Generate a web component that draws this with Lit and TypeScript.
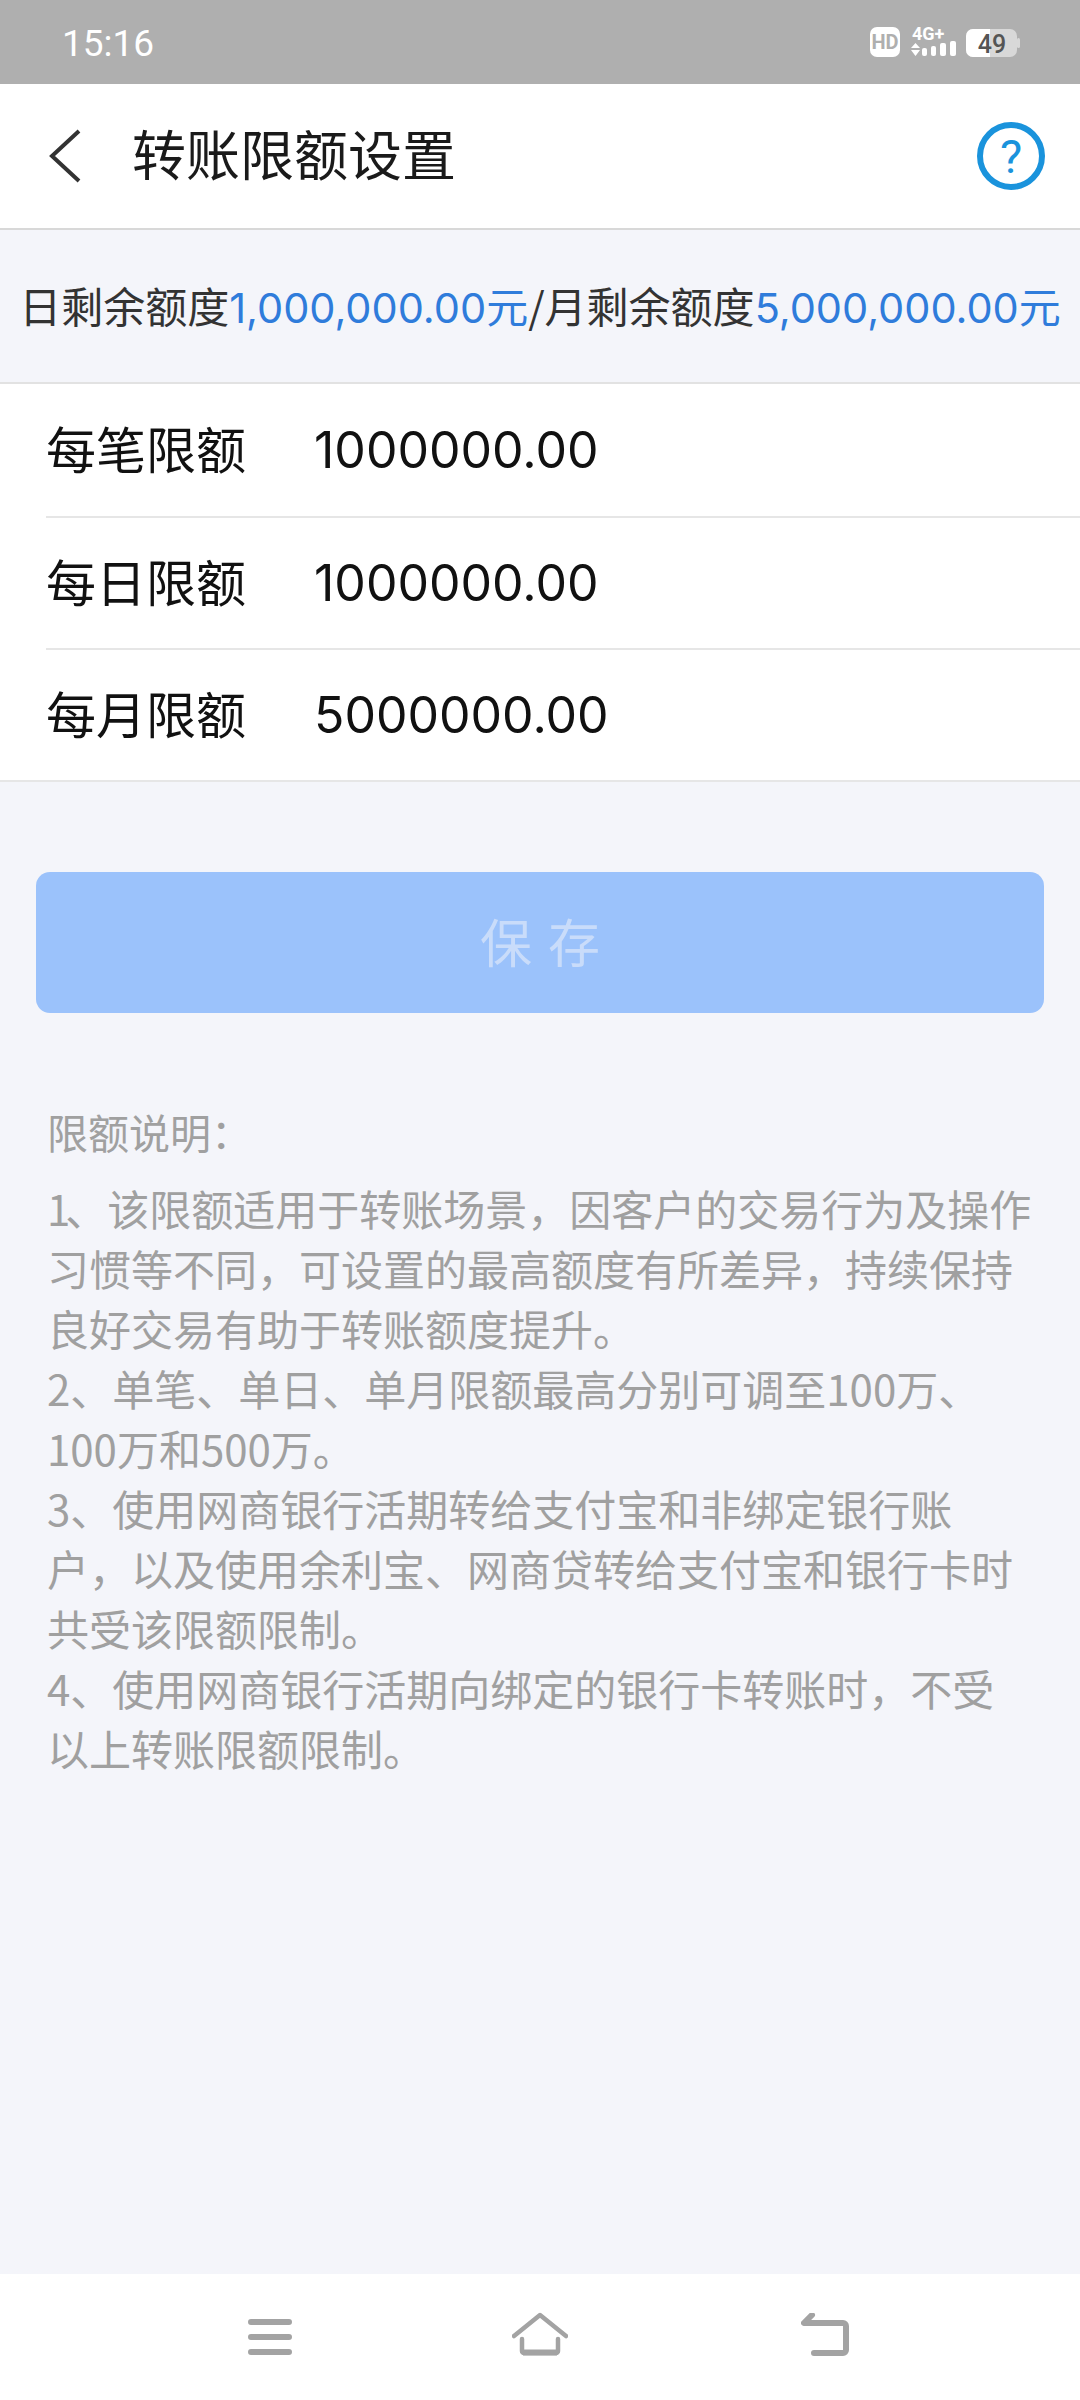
import { LitElement, html, css } from "lit";
import { customElement } from "lit/decorators.js";

const NOTES = [
  "、该限额适用于转账场景，因客户的交易行为及操作",
  "习惯等不同，可设置的最高额度有所差异，持续保持",
  "良好交易有助于转账额度提升。",
  "2、单笔、单日、单月限额最高分别可调至100万、",
  "100万和500万。",
  "3、使用网商银行活期转给支付宝和非绑定银行账",
  "户，以及使用余利宝、网商贷转给支付宝和银行卡时",
  "共受该限额限制。",
  "4、使用网商银行活期向绑定的银行卡转账时，不受",
  "以上转账限额限制。",
];
const ROWS = [
  ["每笔限额", "1000000.00"],
  ["每日限额", "1000000.00"],
  ["每月限额", "5000000.00"],
];

@customElement("app-root")
export class AppRoot extends LitElement {
  static styles = css`
    :host {
      display: flex;
      flex-direction: column;
      width: 1080px;
      height: 2400px;
      background: #f4f5fa;
      font-family: "Noto Sans CJK SC", "Noto Sans", Roboto, sans-serif;
      overflow: hidden;
    }
    .status {
      height: 84px;
      box-sizing: border-box;
      background: #afafaf;
      display: flex;
      align-items: center;
      justify-content: space-between;
      padding: 0 60px 0 62px;
      color: #fff;
      flex: none;
    }
    .time { font: 400 37px Roboto, sans-serif; padding-top: 3px; }
    .nav {
      height: 146px;
      flex: none;
      box-sizing: border-box;
      background: #fff;
      border-bottom: 2px solid #d8d8d8;
      display: flex;
      align-items: center;
      padding: 0 35px 0 48px;
    }
    .title {
      font-size: 54px;
      line-height: 72px;
      color: #1a1a1a;
      margin-left: 50px;
      padding-bottom: 6px;
      flex: 1;
    }
    .summary {
      height: 154px;
      flex: none;
      box-sizing: border-box;
      border-bottom: 2px solid #e2e2e2;
      padding-bottom: 4px;
      display: flex;
      align-items: center;
      justify-content: center;
      font-size: 42px;
      color: #333;
      white-space: pre;
    }
    .summary b { font-weight: 400; color: #2f7cdb; font-family: Inter, "Noto Sans CJK SC", sans-serif; font-size: 41.500px; }
    .summary i { font-style: normal; font-family: "Noto Sans CJK SC", sans-serif; font-size: 42px; }
    .list {
      background: #fff;
      border-bottom: 2px solid #e6e6e6;
      padding-left: 46px;
      flex: none;
    }
    .row {
      height: 132px;
      box-sizing: border-box;
      display: flex;
      align-items: center;
    }
    .row + .row { border-top: 2px solid #e6e6e6; }
    .label { width: 268px; font-size: 50px; color: #111; padding-bottom: 6px; }
    .value { font: 400 50px Inter, Roboto, sans-serif; color: #111; }
    .save {
      margin: 90px 36px 0;
      height: 141px;
      flex: none;
      box-sizing: border-box;
      border-radius: 14px;
      background: #9bc2fb;
      color: #c9dcfa;
      font-size: 52px;
      letter-spacing: 16px;
      padding: 0 0 4px 16px;
      display: flex;
      align-items: center;
      justify-content: center;
    }
    .notes {
      margin: 88px 0 0 47px;
      color: #a0a0a0;
      font-size: 42px;
      line-height: 60px;
      flex: 1;
      white-space: nowrap;
    }
    .notes .h { margin-bottom: 17px; font-size: 41px; }
    .one { letter-spacing: -5px; }
    .bottom {
      height: 126px;
      flex: none;
      box-sizing: border-box;
      background: #fff;
      display: flex;
      align-items: flex-start;
      padding: 38px 0 0 248px;
    }
    .m { margin-top: 7px; }
    .h2 { margin-left: 220px; }
    .b { margin-left: 233px; margin-top: 1px; }
    svg { display: block; flex: none; }
  `;

  render() {
    return html`
      <div class="status">
        <span class="time">15:16</span>
        <svg width="150" height="44" viewBox="0 -5 150 44">
          <rect x="0" y="2" width="30" height="30" rx="7" fill="#fff" />
          <text x="15" y="24" text-anchor="middle" font-family="Roboto" font-weight="700" font-size="20" fill="#afafaf">HD</text>
          <text x="42" y="15" font-family="Roboto" font-weight="700" font-size="18" fill="#fff">4G+</text>
          <path d="M41 23l4.500-5 4.500 5zM41 25h9l-4.500 6z" fill="#fff" />
          <rect x="52" y="23" width="5" height="8" rx="2" fill="#fff" />
          <rect x="61" y="21" width="5" height="10" rx="2" fill="#fff" />
          <rect x="70" y="18" width="6" height="13" rx="2" fill="#fff" />
          <rect x="80" y="16" width="6" height="15" rx="2" fill="#fff" />
          <rect x="96" y="4" width="51" height="28" rx="7" fill="#d8d8d8" />
          <path d="M103 4h17v28h-17a7 7 0 0 1-7-7v-14a7 7 0 0 1 7-7z" fill="#fff" />
          <rect x="147" y="13" width="3" height="10" rx="1.500" fill="#d8d8d8" />
          <text x="122" y="28" text-anchor="middle" font-family="Roboto" font-weight="500" font-size="25" fill="#555">49</text>
        </svg>
      </div>
      <div class="nav">
        <svg width="34" height="56" viewBox="0 0 34 56">
          <path d="M31 3L4 28l27 25" fill="none" stroke="#333" stroke-width="4" />
        </svg>
        <span class="title">转账限额设置</span>
        <svg width="68" height="68" viewBox="0 0 68 68">
          <circle cx="34" cy="34" r="31" fill="none" stroke="#1a93dc" stroke-width="6" />
          <text x="34" y="51" text-anchor="middle" font-family="Roboto" font-weight="400" font-size="47" fill="#1a93dc">?</text>
        </svg>
      </div>
      <div class="summary">日剩余额度<b>1,000,000.00<i>元</i></b>/月剩余额度<b>5,000,000.00<i>元</i></b></div>
      <div class="list">
        ${ROWS.map(
          ([l, v]) => html`<div class="row"><span class="label">${l}</span><span class="value">${v}</span></div>`
        )}
      </div>
      <div class="save">保存</div>
      <div class="notes">
        <div class="h">限额说明：</div>
        ${NOTES.map((n, i) => html`<div>${i === 0 ? html`<span class="one">1</span>` : ""}${n}</div>`)}
      </div>
      <div class="bottom">
        <svg class="m" width="44" height="36" viewBox="0 0 44 36">
          <path d="M3 3h38M3 18h38M3 33h38" stroke="#a3a3a3" stroke-width="6" stroke-linecap="round" />
        </svg>
        <svg class="h2" width="56" height="44" viewBox="0 0 56 44">
          <path d="M2 24L28 3l26 21" fill="none" stroke="#a3a3a3" stroke-width="4.500" stroke-linecap="round" stroke-linejoin="round" />
          <path d="M10 27v12a2 2 0 0 0 2 2h32a2 2 0 0 0 2-2V27" fill="none" stroke="#a3a3a3" stroke-width="4.500" stroke-linecap="round" />
          <path d="M11 40.500h34" stroke="#a3a3a3" stroke-width="6" />
        </svg>
        <svg class="b" width="48" height="43" viewBox="0 0 48 43">
          <path d="M11 2L3 10h39a3 3 0 0 1 3 3v24a3 3 0 0 1-3 3H13" fill="none" stroke="#a3a3a3" stroke-width="6" stroke-linecap="round" stroke-linejoin="round" />
        </svg>
      </div>
    `;
  }
}
